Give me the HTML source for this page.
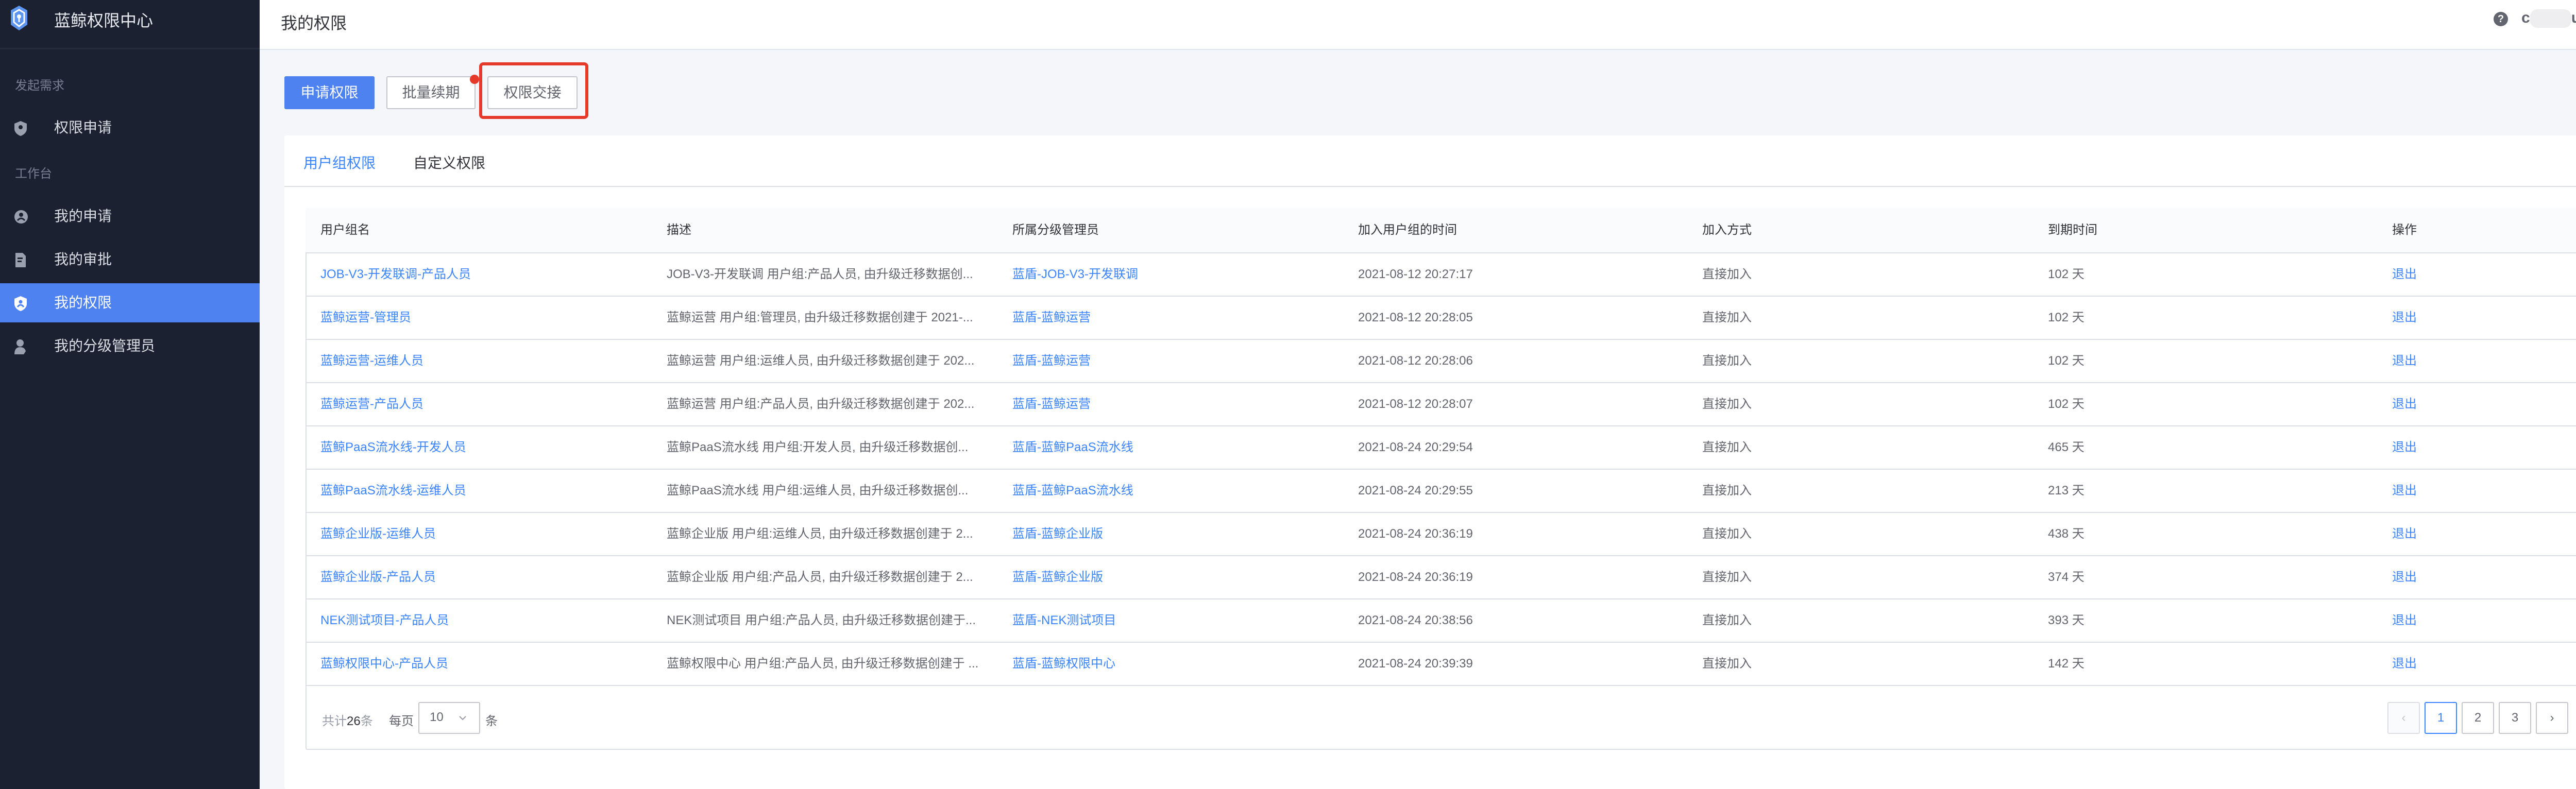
<!DOCTYPE html>
<html style="width:5084px;height:1532px;overflow:hidden"><head><meta charset="utf-8"><style>
*{margin:0;padding:0;box-sizing:border-box}
body{width:5084px;height:1532px;overflow:hidden;background:#f4f6fa;font-family:"Liberation Sans","Noto Sans CJK SC",sans-serif;position:relative}
.abs{position:absolute}
.side{left:0;top:0;width:504px;height:1532px;background:#1b2131}
.logo{left:0;top:0;width:504px;height:96px;border-bottom:3px solid #262c3b}
.mi{position:absolute;left:0;width:504px;height:76px;line-height:76px;color:#dcdee5;font-size:28px;padding-left:105px}
.mi svg{position:absolute;left:28px;top:24px}
.grp{position:absolute;left:29px;color:#7a8092;font-size:24px}
.hdr{left:504px;top:0;width:4580px;height:97px;background:#fff;border-bottom:2px solid #dde4ee}
.btn{position:absolute;top:148px;height:64px;line-height:60px;text-align:center;font-size:28px;border:2px solid #c4c6cc;background:#fff;color:#63656e;border-radius:3px}
.card{left:552px;top:263px;width:4504px;height:1269px;background:#fff;border-radius:4px}
table{position:absolute;left:593px;top:404px;width:4422px;border-collapse:collapse;table-layout:fixed;font-size:24px;line-height:30px}
td,th{height:84px;padding-left:29px;text-align:left;vertical-align:middle;white-space:nowrap;overflow:hidden;text-overflow:ellipsis;border-bottom:2px solid #dcdee5}
th{height:87px;background:#fafbfd;font-weight:normal;color:#313238}
td{color:#63656e}
.l{color:#3a84ff}
.tw{left:593px;top:404px;width:4422px;height:1052px;border:2px solid #dcdee5;border-radius:3px}
.pg{position:absolute;top:1363px;width:63px;height:62px;border:2px solid #c4c6cc;border-radius:3px;text-align:center;line-height:58px;font-size:24px;color:#63656e;background:#fff}
</style></head><body>
<div class="abs side">
 <div class="abs logo">
  <svg class="abs" style="left:20px;top:10px" width="34" height="50" viewBox="0 0 34 50"><path d="M17 1 L33 10 V38 L17 49 L1 38 V10Z" fill="#5c95ef"/><path d="M17 9 L27 15 V33 L17 41 L7 33 V15Z" fill="none" stroke="#fff" stroke-width="3"/><circle cx="17" cy="22" r="4" fill="#fff"/><rect x="15.5" y="24" width="3" height="9" fill="#fff"/></svg>
  <div class="abs" style="left:105px;top:15px;font-size:32px;color:#e8eaf0">蓝鲸权限中心</div>
 </div>
 <div class="grp" style="top:146px">发起需求</div>
 <div class="mi" style="top:210px"><svg width="28" height="30" viewBox="0 0 28 30"><path d="M12 1 L24 6 V16 C24 23 18 28 12 30 C6 28 0 23 0 16 V6Z" fill="#9aa0ad"/><circle cx="12" cy="13" r="4" fill="#1b2131"/></svg>权限申请</div>
 <div class="grp" style="top:317px">工作台</div>
 <div class="mi" style="top:382px"><svg width="28" height="30" viewBox="0 0 28 30"><circle cx="13" cy="15" r="13" fill="#9aa0ad"/><circle cx="13" cy="11" r="4" fill="#1b2131"/><path d="M6 22 Q13 14 20 22" stroke="#1b2131" stroke-width="3" fill="none"/></svg>我的申请</div>
 <div class="mi" style="top:466px"><svg width="28" height="30" viewBox="0 0 28 30"><path d="M2 1 H16 L22 7 V29 H2Z" fill="#9aa0ad"/><rect x="6" y="10" width="10" height="3" fill="#1b2131"/><rect x="6" y="16" width="8" height="3" fill="#1b2131"/></svg>我的审批</div>
 <div class="mi" style="top:550px;background:#4d82f0;color:#fff"><svg width="28" height="30" viewBox="0 0 28 30"><path d="M12 1 L24 6 V16 C24 23 18 28 12 30 C6 28 0 23 0 16 V6Z" fill="#fff"/><circle cx="12" cy="12" r="3.5" fill="#4d82f0"/><path d="M6 22 Q12 14 18 22" stroke="#4d82f0" stroke-width="3" fill="none"/></svg>我的权限</div>
 <div class="mi" style="top:634px"><svg width="28" height="30" viewBox="0 0 28 30"><circle cx="11" cy="8" r="7" fill="#9aa0ad"/><path d="M0 30 Q0 16 11 16 Q20 16 22 24 L18 30Z" fill="#9aa0ad"/></svg>我的分级管理员</div>
</div>
<div class="abs hdr">
 <div class="abs" style="left:41px;top:20px;font-size:32px;color:#313238">我的权限</div>
 <div class="abs" style="left:4336px;top:23px;width:28px;height:28px;border-radius:50%;background:#63656e;color:#fff;font-size:20px;font-weight:bold;text-align:center;line-height:28px">?</div>
 <div class="abs" style="left:4390px;top:18px;font-size:30px;color:#63656e;font-weight:bold;white-space:nowrap">c<span style="display:inline-block;width:80px;height:36px;background:#eeeef0;border-radius:14px;vertical-align:middle"></span>u</div>
 <svg class="abs" style="left:4532px;top:32px" width="16" height="12" viewBox="0 0 16 12"><path d="M2 3 L8 9 L14 3" stroke="#63656e" stroke-width="2" fill="none"/></svg>
</div>
<div class="btn" style="left:552px;width:175px;background:#4d82f0;border-color:#4d82f0;color:#fff">申请权限</div>
<div class="btn" style="left:750px;width:173px">批量续期</div>
<div class="btn" style="left:946px;width:175px">权限交接</div>
<div class="abs" style="left:930px;top:121px;width:212px;height:110px;border:6px solid #e53a2a;border-radius:8px"></div>
<div class="abs" style="left:912px;top:145px;width:18px;height:18px;border-radius:50%;background:#e53a2a"></div>
<div class="abs card"></div>
<div class="abs" style="left:552px;top:361px;width:4504px;height:2px;background:#dcdee5"></div>
<div class="abs" style="left:589px;top:295px;font-size:28px;color:#3a84ff">用户组权限</div>
<div class="abs" style="left:802px;top:295px;font-size:28px;color:#313238">自定义权限</div>
<div class="abs tw"></div>
<table>
<colgroup><col style="width:672px"><col style="width:671px"><col style="width:671px"><col style="width:668px"><col style="width:671px"><col style="width:668px"><col style="width:401px"></colgroup>
<tr><th>用户组名</th><th>描述</th><th>所属分级管理员</th><th>加入用户组的时间</th><th>加入方式</th><th>到期时间</th><th>操作</th></tr>
<tr><td class="l">JOB-V3-开发联调-产品人员</td><td>JOB-V3-开发联调 用户组:产品人员, 由升级迁移数据创...</td><td class="l">蓝盾-JOB-V3-开发联调</td><td>2021-08-12 20:27:17</td><td>直接加入</td><td>102 天</td><td class="l">退出</td></tr>
<tr><td class="l">蓝鲸运营-管理员</td><td>蓝鲸运营 用户组:管理员, 由升级迁移数据创建于 2021-...</td><td class="l">蓝盾-蓝鲸运营</td><td>2021-08-12 20:28:05</td><td>直接加入</td><td>102 天</td><td class="l">退出</td></tr>
<tr><td class="l">蓝鲸运营-运维人员</td><td>蓝鲸运营 用户组:运维人员, 由升级迁移数据创建于 202...</td><td class="l">蓝盾-蓝鲸运营</td><td>2021-08-12 20:28:06</td><td>直接加入</td><td>102 天</td><td class="l">退出</td></tr>
<tr><td class="l">蓝鲸运营-产品人员</td><td>蓝鲸运营 用户组:产品人员, 由升级迁移数据创建于 202...</td><td class="l">蓝盾-蓝鲸运营</td><td>2021-08-12 20:28:07</td><td>直接加入</td><td>102 天</td><td class="l">退出</td></tr>
<tr><td class="l">蓝鲸PaaS流水线-开发人员</td><td>蓝鲸PaaS流水线 用户组:开发人员, 由升级迁移数据创...</td><td class="l">蓝盾-蓝鲸PaaS流水线</td><td>2021-08-24 20:29:54</td><td>直接加入</td><td>465 天</td><td class="l">退出</td></tr>
<tr><td class="l">蓝鲸PaaS流水线-运维人员</td><td>蓝鲸PaaS流水线 用户组:运维人员, 由升级迁移数据创...</td><td class="l">蓝盾-蓝鲸PaaS流水线</td><td>2021-08-24 20:29:55</td><td>直接加入</td><td>213 天</td><td class="l">退出</td></tr>
<tr><td class="l">蓝鲸企业版-运维人员</td><td>蓝鲸企业版 用户组:运维人员, 由升级迁移数据创建于 2...</td><td class="l">蓝盾-蓝鲸企业版</td><td>2021-08-24 20:36:19</td><td>直接加入</td><td>438 天</td><td class="l">退出</td></tr>
<tr><td class="l">蓝鲸企业版-产品人员</td><td>蓝鲸企业版 用户组:产品人员, 由升级迁移数据创建于 2...</td><td class="l">蓝盾-蓝鲸企业版</td><td>2021-08-24 20:36:19</td><td>直接加入</td><td>374 天</td><td class="l">退出</td></tr>
<tr><td class="l">NEK测试项目-产品人员</td><td>NEK测试项目 用户组:产品人员, 由升级迁移数据创建于...</td><td class="l">蓝盾-NEK测试项目</td><td>2021-08-24 20:38:56</td><td>直接加入</td><td>393 天</td><td class="l">退出</td></tr>
<tr><td class="l">蓝鲸权限中心-产品人员</td><td>蓝鲸权限中心 用户组:产品人员, 由升级迁移数据创建于 ...</td><td class="l">蓝盾-蓝鲸权限中心</td><td>2021-08-24 20:39:39</td><td>直接加入</td><td>142 天</td><td class="l">退出</td></tr>
</table>
<div class="abs" style="left:625px;top:1380px;font-size:24px;color:#979ba5">共计<span style="color:#313238">26</span>条</div>
<div class="abs" style="left:755px;top:1380px;font-size:24px;color:#63656e">每页</div>
<div class="abs" style="left:812px;top:1363px;width:120px;height:62px;border:2px solid #c4c6cc;border-radius:3px;font-size:24px;color:#63656e;padding:14px 0 0 20px">10</div>
<svg class="abs" style="left:890px;top:1388px" width="16" height="12" viewBox="0 0 16 12"><path d="M2 3 L8 9 L14 3" stroke="#979ba5" stroke-width="2" fill="none"/></svg>
<div class="abs" style="left:942px;top:1380px;font-size:24px;color:#63656e">条</div>
<div class="pg" style="left:4634px;background:#fafbfd;border-color:#dcdee5;color:#c4c6cc">‹</div>
<div class="pg" style="left:4706px;border-color:#3a84ff;color:#3a84ff">1</div>
<div class="pg" style="left:4778px">2</div>
<div class="pg" style="left:4850px">3</div>
<div class="pg" style="left:4922px">›</div>
</body></html>
